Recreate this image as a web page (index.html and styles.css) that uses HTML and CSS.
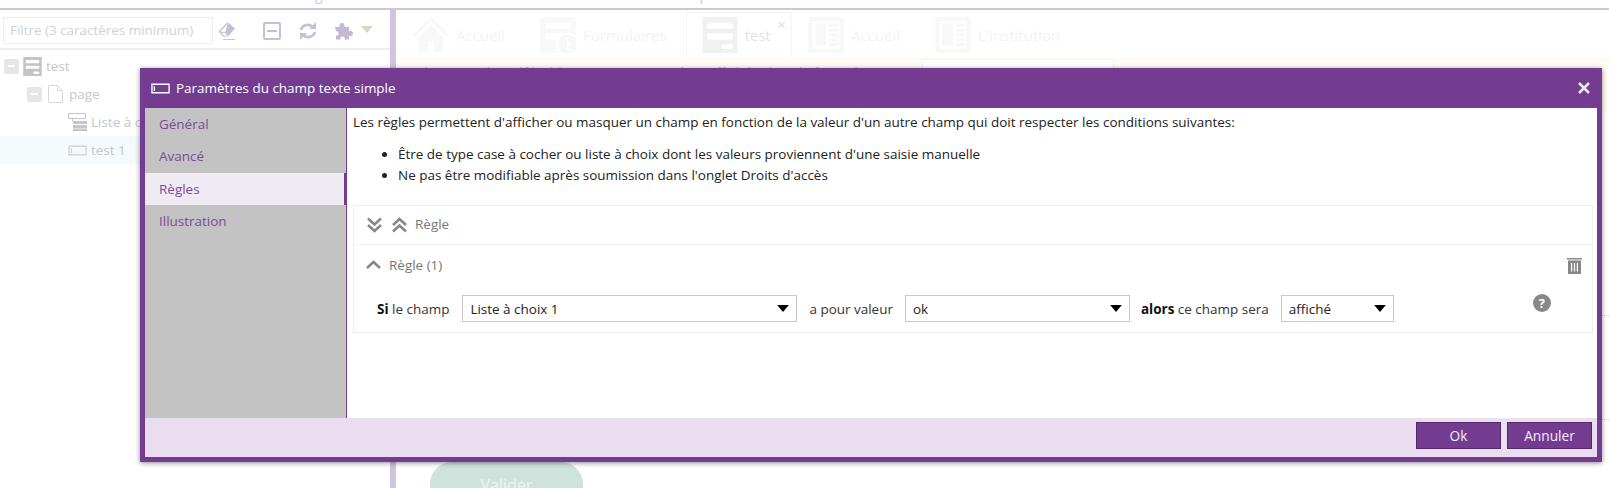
FILE: index.html
```html
<!DOCTYPE html>
<html lang="fr">
<head>
<meta charset="utf-8">
<title>Paramètres du champ texte simple</title>
<link rel="stylesheet" href="styles.css">
</head>
<body>
<svg class="defs" width="0" height="0" aria-hidden="true">
  <symbol id="i-form" viewBox="0 0 36 37"><path fill="currentColor" fill-rule="evenodd" d="M0 0h36v37H0zM5 6v6h26V6zM5 17v6h26v-6zM22 28a2 2 0 0 0 0 5h7a2 2 0 0 0 0-5z"/></symbol>
  <symbol id="i-forms" viewBox="0 0 36 37"><path fill="currentColor" fill-rule="evenodd" d="M0 0h36v37H0zM5 6v6h26V6zM5 17v6h26v-6z"/><circle cx="28" cy="28" r="12" fill="#fff"/><circle cx="28" cy="28" r="10" fill="currentColor"/><path fill="none" stroke="#fff" stroke-width="1.500" d="M24 22h4v12h4M28 28h4"/></symbol>
  <symbol id="i-page" viewBox="0 0 36 37"><path fill="currentColor" fill-rule="evenodd" d="M0 0h36v37H0zM4 4v29h28V4z"/><path fill="currentColor" d="M7 7h11v23H7z"/><path fill="currentColor" d="M21 7h10v3H21zM21 12h10v3H21zM21 17h10v3H21zM21 22h10v3H21zM21 27h10v3H21z"/></symbol>
  <symbol id="i-input" viewBox="0 0 20 11"><path fill="none" stroke="currentColor" stroke-width="1.4" d="M1 1h18v9H1z"/><path fill="none" stroke="currentColor" stroke-width="1.4" d="M3.500 3v5"/></symbol>
  <symbol id="i-dn" viewBox="0 0 10 6"><path fill="currentColor" d="M0 0h10L5 6z"/></symbol>
</svg>

<div class="page">
  <div class="topbar"><span class="frag frag-a">g</span><span class="frag frag-b">p</span></div>
  <div class="main">
    <aside class="tree-pane">
      <div class="toolbar">
        <div class="filter">Filtre (3 caractères minimum)</div>
        <svg class="tool eraser" viewBox="0 0 18 18"><path fill="#c9bdd8" d="M10 .5l7 6-6.500 7.500-3.500-3z"/><path fill="none" stroke="#c9bdd8" stroke-width="1.200" d="M7 11l-5.500-1.500 8-8.500M1.500 9.500l4 4.500h4.500"/><path fill="#c9bdd8" d="M5 17h12v1H5z"/></svg>
        <svg class="tool minus" viewBox="0 0 18 18"><rect x="1" y="1" width="16" height="16" rx="1" fill="none" stroke="#c9bdd8" stroke-width="2"/><path fill="#c9bdd8" d="M4 8h10v2H4z"/></svg>
        <svg class="tool refresh" viewBox="0 0 18 18"><path fill="none" stroke="#c9bdd8" stroke-width="2.600" d="M2 8a7 6.500 0 0 1 12-3M16 10a7 6.500 0 0 1-12 3"/><path fill="#c9bdd8" d="M17 0v7h-7zM1 18v-7h7z"/></svg>
        <svg class="tool puzzle" viewBox="0 0 18 18"><path fill="#c4b8d2" d="M0 5h4.500C4 3 5 1 7 1s3 2 2.500 4H14v4c2-.5 4 .5 4 2.500S16 14.500 14 14v3.500H9.500c.5-2-.5-3-2-3s-2.500 1-2 3H1v-4c2 .5 2.500-.5 2.500-2S2.500 9 1 9.500z"/></svg>
        <svg class="caret" viewBox="0 0 12 7"><path fill="#d9d5ca" d="M0 0h12L6 7z"/></svg>
      </div>
      <ul class="tree">
        <li class="node lvl0"><span class="tog"></span><svg class="ic-form"><use href="#i-form"/></svg><span>test</span></li>
        <li class="node lvl1"><span class="tog"></span><svg class="ic-file" viewBox="0 0 15 18"><path fill="none" stroke="#d6d9e0" d="M.5.5h9l5 5v12H.5zM9.500.5v5h5"/></svg><span>page</span></li>
        <li class="node lvl2"><svg class="ic-list" viewBox="0 0 19 18"><path fill="none" stroke="#c5c5c5" d="M.5.5h17v5H.5zM4.500 5.500v3"/><path fill="#c5c5c5" d="M5 8h14v3H5zM5 12h14v3H5zM5 15.500h14v2.500H5z"/></svg><span>Liste à choix 1</span></li>
        <li class="node lvl2 sel"><svg class="ic-input"><use href="#i-input"/></svg><span>test 1</span></li>
      </ul>
    </aside>
    <div class="divider"></div>
    <section class="work">
      <nav class="tabs">
        <div class="tab"><svg class="tab-ic" viewBox="0 0 36 36"><path fill="none" stroke="#f8f8f8" stroke-width="2.500" d="M1 19L18 2l17 17"/><path fill="#f8f8f8" d="M18 8L6 20v15h9V24h6v11h9V20z"/></svg><span>Accueil</span></div>
        <div class="tab"><svg class="tab-ic tab-form"><use href="#i-forms"/></svg><span>Formulaires</span></div>
        <div class="tab current"><svg class="tab-ic tab-cur"><use href="#i-form"/></svg><span>test</span><b class="tab-x">×</b></div>
        <div class="tab"><svg class="tab-ic tab-form"><use href="#i-page"/></svg><span>Accueil</span></div>
        <div class="tab"><svg class="tab-ic tab-form"><use href="#i-page"/></svg><span>L'institution</span></div>
      </nav>
      <div class="notice">
        <span class="notice-text">Sachant que la Préférable cette page peut être affichée dans le formulaire</span>
        <span class="notice-box">test 1</span>
      </div>
      <div class="row-line first"></div>
      <div class="row-line"></div>
      <button class="submit">Valider</button>
    </section>
  </div>
</div>

<div class="dialog">
  <header class="dlg-head">
    <svg class="ic-head"><use href="#i-input"/></svg>
    <span class="dlg-title">Paramètres du champ texte simple</span>
    <svg class="dlg-close" viewBox="0 0 12 12"><path fill="none" stroke="#ece4f1" stroke-width="2.600" d="M1 1l10 10M11 1L1 11"/></svg>
  </header>
  <div class="dlg-body">
    <nav class="side">
      <a class="side-item">Général</a>
      <a class="side-item">Avancé</a>
      <a class="side-item active">Règles</a>
      <a class="side-item">Illustration</a>
    </nav>
    <div class="content">
      <p class="intro">Les règles permettent d'afficher ou masquer un champ en fonction de la valeur d'un autre champ qui doit respecter les conditions suivantes:</p>
      <ul class="conds">
        <li>Être de type case à cocher ou liste à choix dont les valeurs proviennent d'une saisie manuelle</li>
        <li>Ne pas être modifiable après soumission dans l'onglet Droits d'accès</li>
      </ul>
      <div class="rules">
        <div class="rules-head">
          <svg class="chev2" viewBox="0 0 15 16"><path fill="none" stroke="#888" stroke-width="2.600" d="M1 1.500l6.500 6 6.500-6M1 8l6.500 6 6.500-6"/></svg>
          <svg class="chev2" viewBox="0 0 15 16"><path fill="none" stroke="#888" stroke-width="2.600" d="M1 8l6.500-6 6.500 6M1 14.500l6.500-6 6.500 6"/></svg>
          <span class="rules-label">Règle</span>
        </div>
        <div class="rule">
          <div class="rule-head">
            <svg class="chev1" viewBox="0 0 15 9"><path fill="none" stroke="#888" stroke-width="2.600" d="M1 8l6.500-6 6.500 6"/></svg>
            <span class="rules-label">Règle (1)</span>
            <svg class="trash" viewBox="0 0 15 17"><path fill="#888" d="M0 1h15v1.500H0zM1 3.500h13V17H1z"/><path fill="#fff" d="M4 6h1.200v8.500H4zM6.900 6h1.200v8.500H6.900zM9.800 6H11v8.500H9.800z"/></svg>
          </div>
          <div class="rule-form">
            <span class="lbl lbl-si"><b>Si</b> le champ</span>
            <div class="select s1"><span>Liste à choix 1</span><svg class="arrow"><use href="#i-dn"/></svg></div>
            <span class="lbl lbl-val">a pour valeur</span>
            <div class="select s2"><span>ok</span><svg class="arrow"><use href="#i-dn"/></svg></div>
            <span class="lbl lbl-al"><b>alors</b> ce champ sera</span>
            <div class="select s3"><span>affiché</span><svg class="arrow"><use href="#i-dn"/></svg></div>
            <span class="help">?</span>
          </div>
        </div>
      </div>
    </div>
  </div>
  <footer class="dlg-foot">
    <button class="btn">Ok</button>
    <button class="btn">Annuler</button>
  </footer>
</div>
</body>
</html>
```
FILE: styles.css
```css
* { box-sizing: border-box; }
html, body { margin: 0; padding: 0; }
body {
  width: 1609px;
  height: 488px;
  overflow: hidden;
  background: #fff;
  font-family: "Open Sans", "Liberation Sans", sans-serif;
  font-size: 13.48px;
  color: #222;
}
.defs { position: absolute; }
.page { display: flex; flex-direction: column; height: 488px; }
.topbar {
  height: 10px;
  flex: none;
  display: flex;
  overflow: hidden;
  border-bottom: 2px solid #cfc3de;
  color: #ccc;
  font-size: 14px;
  line-height: 14px;
}
.frag { margin-top: -12px; }
.frag-a { margin-left: 315px; }
.frag-b { margin-left: 377px; }

.main { flex: 1; display: flex; min-height: 0; }
.tree-pane { width: 390px; flex: none; }
.divider { width: 6px; flex: none; background: #cfc3de; }
.work { flex: 1; min-width: 0; }

.toolbar {
  height: 40px;
  display: flex;
  align-items: center;
  padding: 3px 0 0 3px;
  border-bottom: 2px solid #ededed;
}
.filter {
  width: 210px;
  height: 27px;
  border: 1px solid #f0f0f0;
  padding-left: 6px;
  font-size: 13.45px;
  line-height: 25px;
  color: #d2d2d2;
}
.tool { width: 18px; height: 18px; flex: none; }
.eraser { margin-left: 5px; }
.minus { margin-left: 27px; }
.refresh { margin-left: 18px; }
.puzzle { margin-left: 18px; }
.caret { width: 12px; height: 7px; margin-left: 8px; margin-top: -2px; }

.tree { list-style: none; margin: 2px 0 0; padding: 0; color: #c6c6c6; }
.node { height: 28px; display: flex; align-items: center; }
.lvl0 { padding-left: 4px; }
.lvl1 { padding-left: 27px; }
.lvl2 { padding-left: 68px; }
.sel { background: #f5fafd; }
.tog {
  width: 15px;
  height: 15px;
  border-radius: 2px;
  background: #e6e6e6;
  position: relative;
  flex: none;
}
.tog::after {
  content: "";
  position: absolute;
  left: 4px;
  top: 6px;
  width: 7px;
  height: 2px;
  background: #fff;
}
.ic-form { width: 19px; height: 19px; margin: 0 4px 0 4px; color: #c4c4c4; flex: none; }
.ic-file { width: 15px; height: 18px; margin: 0 6px 0 6px; flex: none; }
.ic-list { width: 19px; height: 18px; margin-right: 4px; flex: none; }
.ic-input { width: 19px; height: 11px; margin-right: 4px; color: #d4d4d4; flex: none; }

.tabs { height: 47px; display: flex; align-items: flex-end; padding-left: 1px; }
.tab {
  height: 45px;
  display: flex;
  align-items: center;
  padding: 0 18px 0 15px;
  font-size: 15px;
  color: #f3f3f3;
  position: relative;
  border: 1px solid transparent;
  border-bottom: 0;
}
.tab-ic { width: 36px; height: 36px; margin-right: 7px; flex: none; }
.tab-form { color: #f8f8f8; }
.tab-cur { color: #f1f1f1; }
.current { color: #e4e4e4; border-color: #f4f4f4; padding-right: 20px; }
.tab-x {
  position: absolute;
  right: 5px;
  top: 1px;
  font-weight: 400;
  font-size: 15px;
  color: #ddd;
}
.notice {
  height: 55px;
  background: #fffcf3;
  display: flex;
  justify-content: space-between;
  padding: 2px 495px 0 6px;
  color: #ccc;
  font-size: 14px;
}
.notice-text { padding-top: 4px; }
.notice-box {
  width: 192px;
  height: 30px;
  background: #fff;
  border: 1px solid #f2f2f2;
  padding: 3px 6px;
  text-align: center;
}
.row-line { height: 204px; border-bottom: 1px dotted #d8d8d8; }
.row-line.first { height: 204px; }
.row-line + .row-line { height: 104px; }
.submit {
  display: block;
  width: 153px;
  height: 46px;
  margin: 42px 0 0 34px;
  border: 0;
  border-radius: 22px;
  background: #cfe3dd;
  color: #eef6f3;
  font: 16px "Open Sans", sans-serif;
  padding: 0;
}

.dialog {
  position: absolute;
  left: 140px;
  top: 68px;
  width: 1462px;
  height: 394px;
  border: 5px solid #733c91;
  border-top: 0;
  box-shadow: 0 1px 5px rgba(0, 0, 0, .45);
  display: flex;
  flex-direction: column;
  background: #fff;
}
.dlg-head {
  height: 40px;
  flex: none;
  background: #733c91;
  color: #fff;
  display: flex;
  align-items: center;
  padding-left: 6px;
}
.ic-head { width: 19px; height: 11px; color: #fff; margin-right: 6px; }
.dlg-title { flex: 1; }
.dlg-close { width: 12px; height: 12px; margin-right: 7px; }
.dlg-body { flex: 1; display: flex; min-height: 0; }
.side {
  width: 202px;
  flex: none;
  background: #c3c3c3;
  border-right: 1px solid #733c91;
  display: flex;
  flex-direction: column;
}
.side-item {
  height: 32.3px;
  padding-left: 14px;
  line-height: 32px;
  color: #7b4a9b;
}
.active { background: #f0eaf3; border-right: 2px solid #733c91; }
.content { flex: 1; padding: 4px 4px 0 6px; min-width: 0; }
.intro { margin: 0; line-height: 20px; color: #222; }
.conds { margin: 12px 0 20px; padding-left: 45px; line-height: 20.5px; }
.rules { border: 1px solid #efefef; }
.rules-head {
  height: 39px;
  display: flex;
  align-items: center;
  padding: 0 0 2px 13px;
  border-bottom: 1px solid #efefef;
  gap: 10px;
}
.rules-label { color: #777; }
.chev2 { width: 15px; height: 16px; margin-top: 1px; }
.rules-head .rules-label { margin-left: -2px; }
.rule { height: 87px; }
.rule-head { display: flex; align-items: center; height: 40px; margin-bottom: 2px; padding: 0 10px 0 12px; }
.chev1 { width: 15px; height: 9px; margin-right: 8px; margin-top: -2px; }
.trash { width: 15px; height: 17px; margin-left: auto; }
.rule-form { display: flex; align-items: center; height: 27px; margin-top: 10px; padding-left: 23px; }
.lbl { white-space: nowrap; color: #333; }
.lbl b { font-weight: 700; color: #111; }
.select {
  height: 27px;
  border: 1px solid #c8c8c8;
  background: #fff;
  display: flex;
  align-items: center;
  justify-content: space-between;
  padding: 0 7px 0 7px;
  color: #222;
}
.arrow { width: 12px; height: 7px; color: #000; }
.s1 { width: 335px; margin-left: 13px; }
.s2 { width: 225px; margin-left: 12px; }
.s3 { width: 113px; margin-left: 12px; }
.lbl-val { margin-left: 12px; }
.lbl-al { margin-left: 11px; }
.help {
  width: 18px;
  height: 18px;
  border-radius: 50%;
  background: #888;
  color: #fff;
  font-weight: 700;
  font-size: 13px;
  line-height: 18px;
  text-align: center;
  margin-left: 139px;
  margin-top: -11px;
}
.dlg-foot {
  height: 39px;
  flex: none;
  background: #e9ddef;
  display: flex;
  justify-content: flex-end;
  align-items: center;
  gap: 6px;
  padding: 0 5px 5px 0;
}
.btn {
  width: 85px;
  height: 27px;
  background: #733c91;
  border: 1px solid #4f2a66;
  color: #f3edf7;
  font: 13.7px "Open Sans", sans-serif;
  padding: 0;
}
```
